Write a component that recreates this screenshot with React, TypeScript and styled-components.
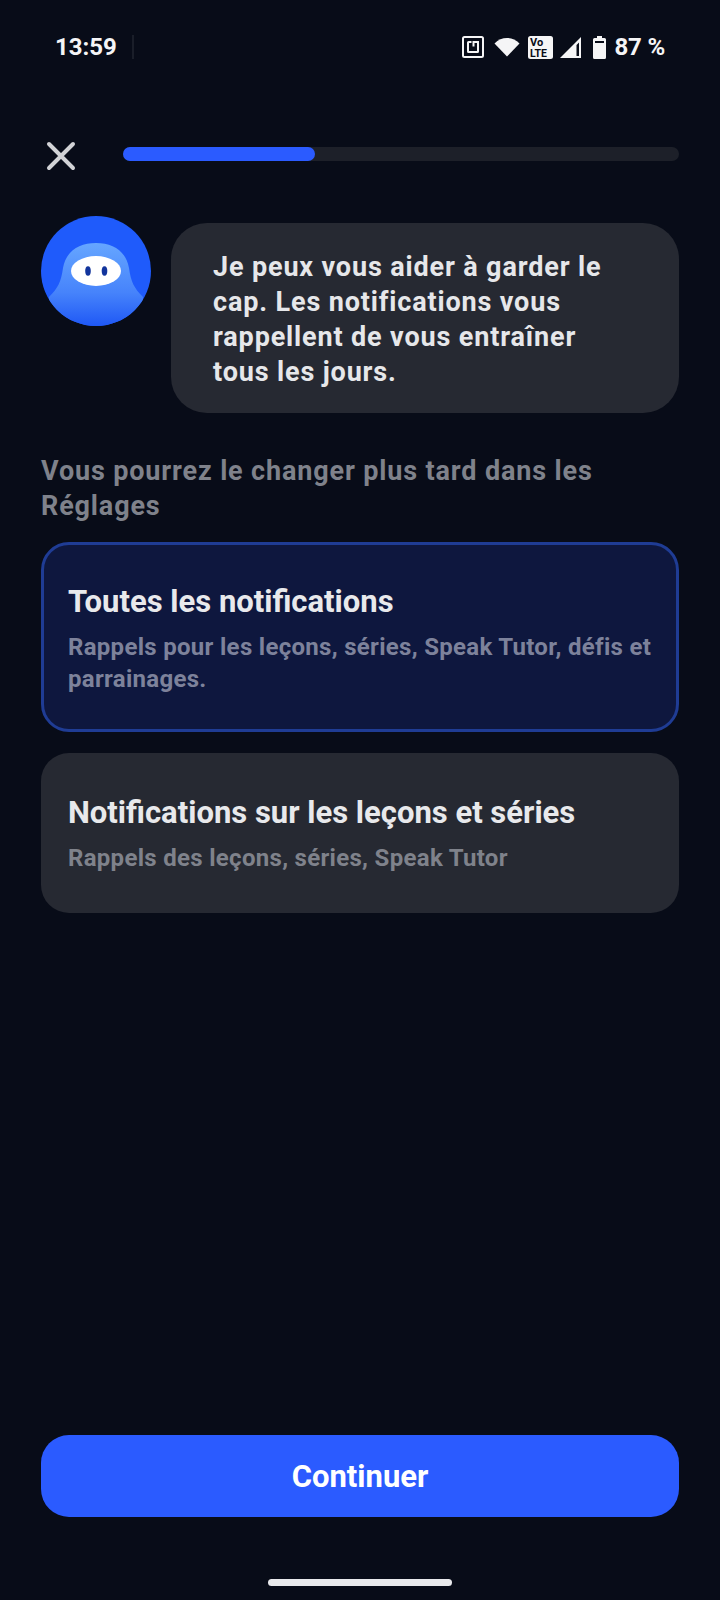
import React from "react";
import styled, { createGlobalStyle } from "styled-components";

const GlobalStyle = createGlobalStyle`
  html, body {
    margin: 0;
    padding: 0;
    background: #080c18;
  }
  * {
    box-sizing: border-box;
  }
`;

const Screen = styled.div`
  display: flex;
  flex-direction: column;
  width: 720px;
  height: 1600px;
  background: #080c18;
  font-family: Roboto, "Liberation Sans", sans-serif;
  color: #e8e9ec;
`;

const StatusBar = styled.div`
  display: flex;
  justify-content: space-between;
  align-items: center;
  height: 28px;
  margin-top: 33px;
  padding: 0 55px;
  color: #f5f5f6;
`;

const StatusLeft = styled.div`
  display: flex;
  align-items: center;
  gap: 15px;
`;

const StatusTime = styled.div`
  font-size: 24px;
  font-weight: 700;
`;

const BlurredIcon = styled.div`
  width: 2px;
  height: 24px;
  background: #1a1e29;
`;

const StatusIcons = styled.div`
  display: flex;
  align-items: center;
`;

const IconSlot = styled.div<{ $gap: number }>`
  display: flex;
  margin-left: ${(props) => props.$gap}px;
`;

const BatteryText = styled.div`
  margin-left: 9px;
  font-size: 24px;
  font-weight: 700;
  letter-spacing: -0.2px;
`;

const Header = styled.div`
  display: flex;
  align-items: center;
  gap: 46px;
  margin-top: 75px;
  padding: 0 41px 0 45px;
`;

const CloseButton = styled.div`
  display: flex;
  flex: none;
  width: 32px;
  height: 32px;
  margin-top: 4px;
`;

const ProgressTrack = styled.div`
  flex: 1;
  height: 14px;
  border-radius: 7px;
  background: #1d2029;
`;

const ProgressFill = styled.div`
  height: 100%;
  border-radius: 7px;
  background: #2b5bff;
`;

const Intro = styled.div`
  display: flex;
  align-items: flex-start;
  gap: 20px;
  margin-top: 44px;
  padding: 0 41px;
`;

const Avatar = styled.div`
  flex: none;
  width: 110px;
  height: 110px;
`;

const Bubble = styled.div`
  flex: 1;
  height: 190px;
  margin-top: 7px;
  padding: 27px 60px 0 42px;
  border-radius: 36px;
  background: #262932;
  font-size: 27px;
  font-weight: 700;
  line-height: 35px;
  letter-spacing: 0.85px;
  color: #e6e7ea;
`;

const Hint = styled.div`
  margin-top: 41px;
  padding: 0 41px;
  font-size: 27px;
  font-weight: 700;
  line-height: 35px;
  letter-spacing: 0.85px;
  color: #7f828b;
`;

const Options = styled.div`
  display: flex;
  flex-direction: column;
  gap: 21px;
  margin-top: 18px;
  padding: 0 41px;
`;

const Option = styled.div<{ $selected?: boolean }>`
  height: ${(props) => (props.$selected ? "190px" : "160px")};
  padding: ${(props) => (props.$selected ? "37px 24px 0" : "40px 27px 0")};
  border-radius: 28px;
  border: ${(props) => (props.$selected ? "3px solid #1f3c94" : "none")};
  background: ${(props) => (props.$selected ? "#0e173e" : "#262932")};
`;

const OptionTitle = styled.div`
  font-size: 31px;
  font-weight: 700;
  line-height: 40px;
  color: #e8e9ec;
`;

const OptionText = styled.div<{ $selected?: boolean }>`
  margin-top: 9px;
  font-size: 24px;
  font-weight: 700;
  line-height: 32px;
  letter-spacing: 0.3px;
  color: ${(props) => (props.$selected ? "#7d829b" : "#7f828b")};
`;

const Footer = styled.div`
  display: flex;
  flex-direction: column;
  align-items: center;
  margin-top: auto;
  padding: 0 41px 14px;
`;

const ContinueButton = styled.div`
  display: flex;
  align-items: center;
  justify-content: center;
  width: 100%;
  height: 82px;
  border-radius: 28px;
  background: #2b5bff;
  font-size: 31px;
  font-weight: 700;
  color: #ffffff;
`;

const HomeBar = styled.div`
  width: 184px;
  height: 7px;
  margin-top: 62px;
  border-radius: 4px;
  background: #e8e9ec;
`;

const options = [
  {
    title: "Toutes les notifications",
    text: "Rappels pour les leçons, séries, Speak Tutor, défis et parrainages.",
    selected: true,
  },
  {
    title: "Notifications sur les leçons et séries",
    text: "Rappels des leçons, séries, Speak Tutor",
    selected: false,
  },
];

function NfcIcon() {
  return (
    <svg width="22" height="22" viewBox="0 0 22 22" fill="none" stroke="#f5f5f6" strokeWidth="2">
      <rect x="1" y="1" width="20" height="20" rx="1.5" />
      <path d="M9.5 6H6.5a.5.5 0 0 0-.5.5v9a.5.5 0 0 0 .5.5h9a.5.5 0 0 0 .5-.5V6h-4.5v4.5" />
    </svg>
  );
}

function WifiIcon() {
  return (
    <svg width="26" height="20" viewBox="0 0 26 20">
      <path d="M0.5 6.5C7.5 -0.8 18.5 -0.8 25.5 6.5L13 19.5Z" fill="#f5f5f6" />
    </svg>
  );
}

function VolteIcon() {
  return (
    <svg width="25" height="23" viewBox="0 0 25 23">
      <rect width="25" height="23" rx="2.5" fill="#f5f5f6" />
      <text x="2" y="10" fontSize="11" fontWeight="700" fontFamily="Roboto" fill="#080c18">Vo</text>
      <text x="2" y="20.5" fontSize="10.5" fontWeight="700" fontFamily="Roboto" fill="#080c18">LTE</text>
    </svg>
  );
}

function SignalIcon() {
  return (
    <svg width="21" height="21" viewBox="0 0 21 21">
      <path d="M21 0V21H0ZM19 5.5L16.5 8V19H19Z" fill="#f5f5f6" fillRule="evenodd" />
    </svg>
  );
}

function BatteryIcon() {
  return (
    <svg width="13" height="23" viewBox="0 0 13 23">
      <path
        d="M4 0h5v2h2.5A1.5 1.5 0 0 1 13 3.5v18a1.5 1.5 0 0 1-1.5 1.5h-10A1.5 1.5 0 0 1 0 21.5v-18A1.5 1.5 0 0 1 1.5 2H4z"
        fill="#f5f5f6"
      />
      <rect x="2" y="5" width="9" height="2" fill="#080c18" />
    </svg>
  );
}

function CloseIcon() {
  return (
    <svg width="32" height="32" viewBox="0 0 32 32" stroke="#d2d3d6" strokeWidth="4" strokeLinecap="round">
      <path d="M4 4L28 28M28 4L4 28" />
    </svg>
  );
}

function MascotIcon() {
  return (
    <svg width="110" height="110" viewBox="0 0 110 110">
      <defs>
        <linearGradient id="body" x1="0" y1="0" x2="0" y2="1">
          <stop offset="0" stopColor="#66a6ff" />
          <stop offset="0.6" stopColor="#4683fb" />
          <stop offset="1" stopColor="#1f58f5" />
        </linearGradient>
        <clipPath id="disc">
          <circle cx="55" cy="55" r="55" />
        </clipPath>
      </defs>
      <circle cx="55" cy="55" r="55" fill="#1f5bfb" />
      <g clipPath="url(#disc)">
        <path
          d="M8 81C17 72 20 66 22 52C25 35 38 27 55 27C72 27 85 35 88 52C90 66 93 72 102 81L102 110H8Z"
          fill="url(#body)"
        />
      </g>
      <ellipse cx="55" cy="55" rx="25" ry="15" fill="#ffffff" />
      <ellipse cx="47" cy="55" rx="2.8" ry="4.8" fill="#12349c" />
      <ellipse cx="63.5" cy="55" rx="2.8" ry="4.8" fill="#12349c" />
    </svg>
  );
}

export default function App() {
  return (
    <Screen>
      <GlobalStyle />
      <StatusBar>
        <StatusLeft>
          <StatusTime>13:59</StatusTime>
          <BlurredIcon />
        </StatusLeft>
        <StatusIcons>
          <IconSlot $gap={0}>
            <NfcIcon />
          </IconSlot>
          <IconSlot $gap={10}>
            <WifiIcon />
          </IconSlot>
          <IconSlot $gap={8}>
            <VolteIcon />
          </IconSlot>
          <IconSlot $gap={7}>
            <SignalIcon />
          </IconSlot>
          <IconSlot $gap={12}>
            <BatteryIcon />
          </IconSlot>
          <BatteryText>87 %</BatteryText>
        </StatusIcons>
      </StatusBar>
      <Header>
        <CloseButton>
          <CloseIcon />
        </CloseButton>
        <ProgressTrack>
          <ProgressFill style={{ width: `${(192 / 556) * 100}%` }} />
        </ProgressTrack>
      </Header>
      <Intro>
        <Avatar>
          <MascotIcon />
        </Avatar>
        <Bubble>
          Je peux vous aider à garder le cap. Les notifications vous rappellent de vous entraîner tous les jours.
        </Bubble>
      </Intro>
      <Hint>Vous pourrez le changer plus tard dans les Réglages</Hint>
      <Options>
        {options.map((option) => (
          <Option key={option.title} $selected={option.selected}>
            <OptionTitle>{option.title}</OptionTitle>
            <OptionText $selected={option.selected}>{option.text}</OptionText>
          </Option>
        ))}
      </Options>
      <Footer>
        <ContinueButton>Continuer</ContinueButton>
        <HomeBar />
      </Footer>
    </Screen>
  );
}
